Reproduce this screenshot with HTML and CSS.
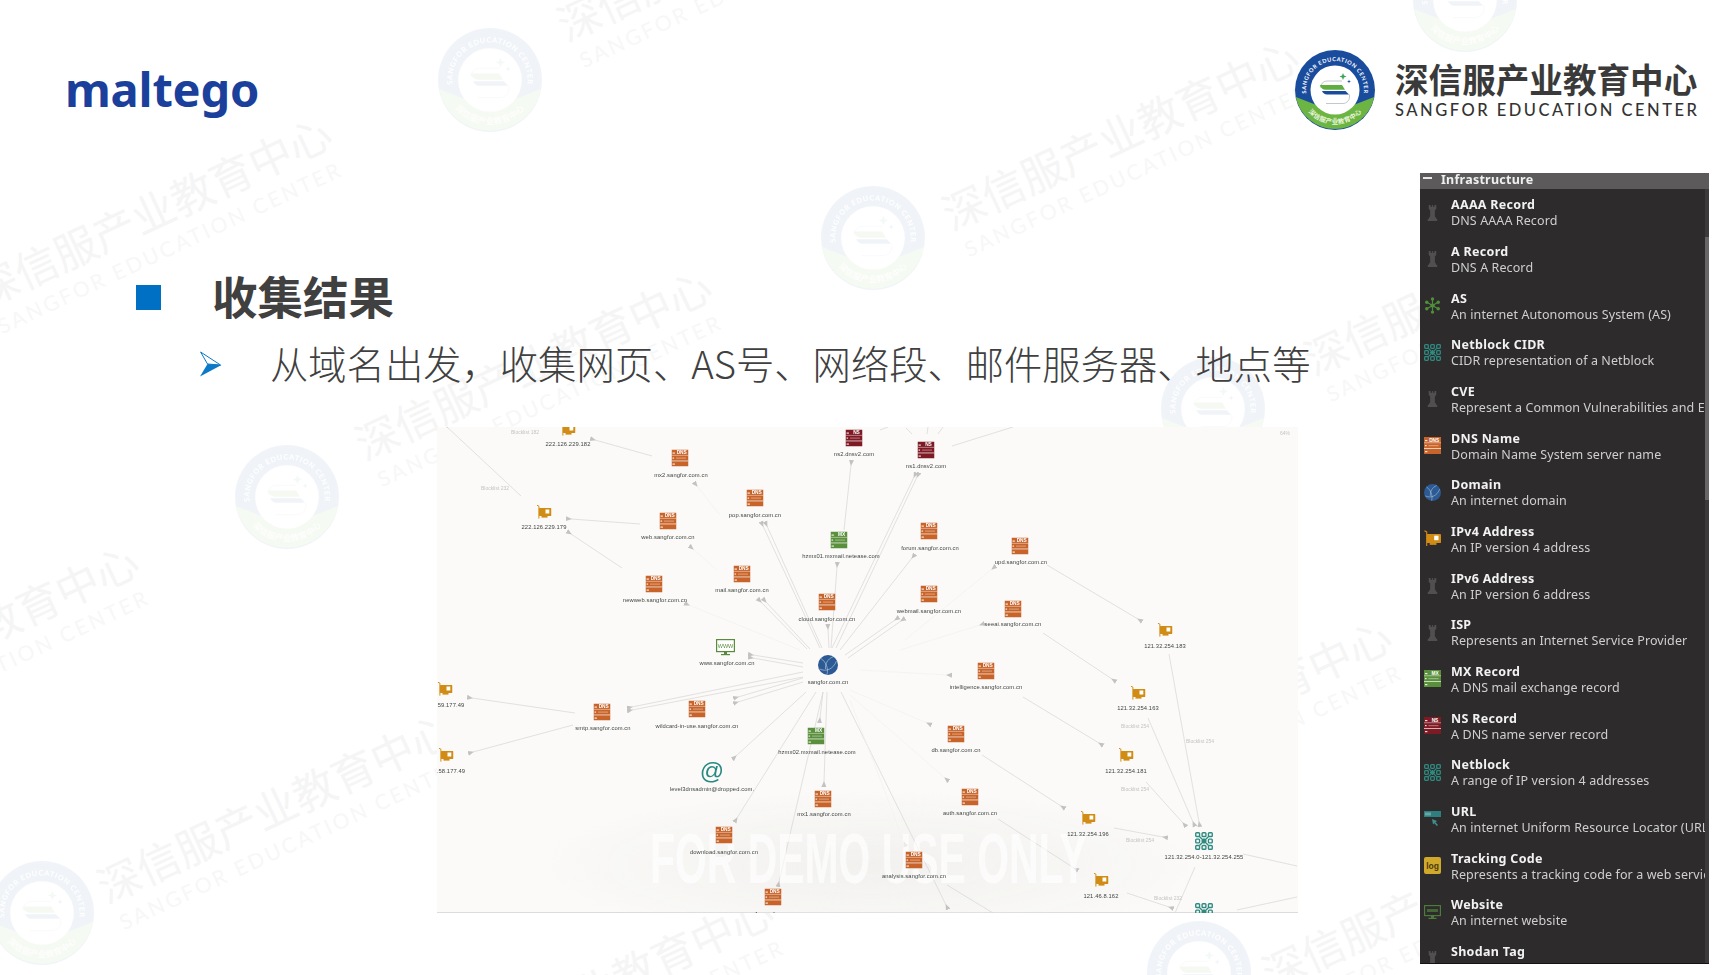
FILE: index.html
```html
<!DOCTYPE html>
<html lang="zh-CN">
<head>
<meta charset="utf-8">
<title>maltego 收集结果</title>
<link rel="stylesheet" href="styles.css">
</head>
<body>
<svg class="defs" aria-hidden="true">
  <symbol id="srv" viewBox="0 0 17 17">
    <rect width="17" height="17" fill="currentColor"/>
    <rect x="1" y="3" width="2.4" height="1.2" fill="#fff" opacity=".85"/>
    <rect x="0" y="5.4" width="17" height=".8" fill="#fff" opacity=".55"/>
    <rect x="1" y="8" width="1.6" height="1.2" fill="#fff" opacity=".85"/>
    <rect x="4.5" y="8" width="10" height="1.2" fill="#fff" opacity=".35"/>
    <rect x="0" y="11" width="17" height=".9" fill="#fff" opacity=".75"/>
    <rect x="1" y="14" width="2.4" height="1.2" fill="#fff" opacity=".85"/>
  </symbol>
  <symbol id="dns" viewBox="0 0 17 17"><use href="#srv" width="17" height="17"/><text x="10.2" y="4.7" class="srv-t">DNS</text></symbol>
  <symbol id="mx" viewBox="0 0 17 17"><use href="#srv" width="17" height="17"/><text x="11" y="4.7" class="srv-t">MX</text></symbol>
  <symbol id="ns" viewBox="0 0 17 17"><use href="#srv" width="17" height="17"/><text x="11" y="4.7" class="srv-t">NS</text></symbol>
  <symbol id="ip" viewBox="0 0 15 14">
    <path d="M.4.2 2.4 1.2V13.6" fill="none" stroke="currentColor" stroke-width="1"/>
    <rect x="2.4" y="3" width="12.6" height="8" rx=".8" fill="currentColor"/>
    <rect x="9" y="4.5" width="3.8" height="4" fill="#fff"/>
    <rect x="5" y="11" width="6" height="1.6" fill="currentColor"/>
  </symbol>
  <symbol id="net" viewBox="0 0 17 17">
    <g fill="none" stroke="currentColor" stroke-width="1.3">
      <rect x=".7" y=".7" width="3.6" height="3.6" rx=".8"/><rect x="6.7" y=".7" width="3.6" height="3.6" rx=".8"/><rect x="12.7" y=".7" width="3.6" height="3.6" rx=".8"/>
      <rect x=".7" y="6.7" width="3.6" height="3.6" rx=".8"/><rect x="12.7" y="6.7" width="3.6" height="3.6" rx=".8"/>
      <rect x=".7" y="12.7" width="3.6" height="3.6" rx=".8"/><rect x="6.7" y="12.7" width="3.6" height="3.6" rx=".8"/><rect x="12.7" y="12.7" width="3.6" height="3.6" rx=".8"/>
      <path d="M4.4 4.4 12.6 12.6M12.6 4.4 4.4 12.6M6 8.5H11M8.5 6V11"/>
    </g>
    <circle cx="8.5" cy="8.5" r="1.8" fill="currentColor"/>
  </symbol>
  <symbol id="globe" viewBox="0 0 20 20">
    <circle cx="10" cy="10" r="10" fill="currentColor"/>
    <g fill="none" stroke="#fff" stroke-width=".8" opacity=".55">
      <path d="M3 3.5C8 7 10.500 13 9 19.500M15 1.800C9.500 4 7 9 7.500 14M1.500 14C8 17 15 14.500 18.500 6"/>
    </g>
  </symbol>
  <symbol id="www" viewBox="0 0 19 17">
    <rect x=".6" y=".6" width="17.800" height="12" fill="#fff" stroke="#5a8a3c" stroke-width="1.200"/>
    <text x="9.500" y="9" class="www-t">WWW</text>
    <rect x="8" y="13" width="3" height="2" fill="#5a8a3c"/><rect x="5" y="15" width="9" height="1.200" fill="#5a8a3c"/>
  </symbol>
  <symbol id="site" viewBox="0 0 17 15">
    <rect x=".6" y=".6" width="15.800" height="10" fill="none" stroke="#4f7f3c" stroke-width="1.100"/>
    <rect x="3" y="4" width="11" height="3" fill="#4f7f3c" opacity=".7"/>
    <rect x="7" y="11" width="3" height="1.800" fill="#4f7f3c"/><rect x="4.500" y="12.800" width="8" height="1.200" fill="#4f7f3c"/>
  </symbol>
  <symbol id="rook" viewBox="0 0 12 18">
    <path fill="currentColor" d="M2 1h2v2h1.500V1h1v2H8V1h2v4L8.500 7v6L10 15v1h1v2H1v-2h1v-1l1.500-2V7L2 5z"/>
  </symbol>
  <symbol id="as" viewBox="0 0 16 16">
    <g stroke="#4f8f3a" stroke-width="1.100"><path d="M8 2V14M2.800 5 13.200 11M13.200 5 2.800 11"/></g>
    <g fill="#4f8f3a"><circle cx="8" cy="8" r="2"/><circle cx="8" cy="1.800" r="1.600"/><circle cx="8" cy="14.200" r="1.600"/><circle cx="2.600" cy="4.900" r="1.600"/><circle cx="13.400" cy="4.900" r="1.600"/><circle cx="2.600" cy="11.100" r="1.600"/><circle cx="13.400" cy="11.100" r="1.600"/></g>
  </symbol>
  <symbol id="url" viewBox="0 0 17 17">
    <rect y="1" width="17" height="6" fill="#2f7f80"/>
    <rect x="1" y="2.500" width="6" height="3" fill="#8fc0c0" opacity=".6"/>
    <path d="M8 9 13 11 11.500 12.200 14 15 12.800 16 10.400 13.200 9 14.500z" fill="#3b8f90"/>
  </symbol>
  <symbol id="log" viewBox="0 0 17 17">
    <rect width="17" height="17" rx="2" fill="#d0a92b"/>
    <text x="8.500" y="11.500" class="log-t">log</text>
  </symbol>
  <symbol id="badge" viewBox="0 0 80 80">
    <circle cx="40" cy="40" r="40" fill="#1a4c9e"/>
    <path d="M.8 47 24 56A24 24 0 0 0 56 56L79.200 47A40 40 0 0 1 .8 47Z" fill="#6db543"/>
    <circle cx="40" cy="40" r="24.500" fill="#fff"/>
    <path id="arc-top" d="M12.100 48A29 29 0 1 1 67.900 48" fill="none"/>
    <path id="arc-bot" d="M8.500 55A35.500 35.500 0 0 0 71.500 55" fill="none"/>
    <text class="badge-en"><textPath href="#arc-top" startOffset="50%">SANGFOR EDUCATION CENTER</textPath></text>
    <text class="badge-cn"><textPath href="#arc-bot" startOffset="50%">深信服产业教育中心</textPath></text>
    <path d="M47 31H32A6.500 6.500 0 0 0 25.500 37.500" fill="none" stroke="#9aa3ad" stroke-width=".6"/>
    <path d="M25 35H47L50 39.800H31A6 6 0 0 1 25 35Z" fill="#5fae3e"/>
    <path d="M27 41H50.500L54 44.500H32A6 6 0 0 1 27 41Z" fill="#1a4c9e"/>
    <path d="M31 53.500H48A6.500 6.500 0 0 0 54.500 47V44.500" fill="none" stroke="#9aa3ad" stroke-width=".6"/>
    <path d="M48 23 49 25.500 51.500 26.500 49 27.500 48 30 47 27.500 44.500 26.500 47 25.500Z" fill="#3fa45a"/>
    <path d="M54 29.500 54.500 31 56 31.500 54.500 32 54 33.500 53.500 32 52 31.500 53.500 31Z" fill="#1a4c9e"/>
  </symbol>
</svg>

<div class="slide">
  <div class="watermarks" aria-hidden="true">
    <div class="wm wm-a"><span class="wm-cn">深信服产业教育中心</span><span class="wm-en">SANGFOR EDUCATION CENTER</span></div>
    <div class="wm wm-b"><span class="wm-cn">深信服产业教育中心</span><span class="wm-en">SANGFOR EDUCATION CENTER</span></div>
    <div class="wm wm-c"><span class="wm-cn">深信服产业教育中心</span><span class="wm-en">SANGFOR EDUCATION CENTER</span></div>
    <div class="wm wm-d"><span class="wm-cn">深信服产业教育中心</span><span class="wm-en">SANGFOR EDUCATION CENTER</span></div>
    <div class="wm wm-e"><span class="wm-cn">深信服产业教育中心</span><span class="wm-en">SANGFOR EDUCATION CENTER</span></div>
    <div class="wm wm-f"><span class="wm-cn">深信服产业教育中心</span><span class="wm-en">SANGFOR EDUCATION CENTER</span></div>
    <div class="wm wm-g"><span class="wm-cn">深信服产业教育中心</span><span class="wm-en">SANGFOR EDUCATION CENTER</span></div>
    <div class="wm wm-h"><span class="wm-cn">深信服产业教育中心</span><span class="wm-en">SANGFOR EDUCATION CENTER</span></div>
    <div class="wm wm-i"><span class="wm-cn">深信服产业教育中心</span><span class="wm-en">SANGFOR EDUCATION CENTER</span></div>
    <div class="wm wm-j"><span class="wm-cn">深信服产业教育中心</span><span class="wm-en">SANGFOR EDUCATION CENTER</span></div>
    <svg class="wl wl-a"><use href="#badge"/></svg>
    <svg class="wl wl-b"><use href="#badge"/></svg>
    <svg class="wl wl-c"><use href="#badge"/></svg>
    <svg class="wl wl-d"><use href="#badge"/></svg>
    <svg class="wl wl-e"><use href="#badge"/></svg>
    <svg class="wl wl-f"><use href="#badge"/></svg>
    <svg class="wl wl-g"><use href="#badge"/></svg>
  </div>

  <header class="top">
    <div class="brand">maltego</div>
    <div class="org">
      <svg class="org-badge"><use href="#badge"/></svg>
      <div class="org-name">
        <div class="org-cn">深信服产业教育中心</div>
        <div class="org-en">SANGFOR EDUCATION CENTER</div>
      </div>
    </div>
  </header>

  <div class="main">
    <section class="content">
      <h1 class="h1"><span class="square"></span>收集结果</h1>
      <p class="sub">
        <svg class="bullet" viewBox="0 0 22 26"><path d="M.6 1 20.500 14 7.500 13Z" fill="#fff" stroke="#0b78c8" stroke-width="1"/><path d="M7.500 13 21.500 14 0 25.500Z" fill="#0b78c8"/></svg>
        从域名出发&#xFF0C;收集网页、AS号、网络段、邮件服务器、地点等
      </p>
      <figure class="graph">
        <svg class="graph-svg" viewBox="437 427 861 486" width="861" height="486">
          <defs>
            <marker id="arrow" markerUnits="userSpaceOnUse" markerWidth="6" markerHeight="6" refX="1" refY="2.500" orient="auto-start-reverse" viewBox="0 0 6 5">
              <path d="M6 0 0 2.500 6 5z" fill="#c2c2c0"/>
            </marker>
            <radialGradient id="shade"><stop offset="0" stop-color="#efeeec" stop-opacity=".8"/><stop offset="1" stop-color="#efeeec" stop-opacity="0"/></radialGradient>
          </defs>
          <ellipse cx="870" cy="865" rx="330" ry="75" fill="url(#shade)"/>
          <g class="edges" marker-start="url(#arrow)">
            <path d="M447 427 521 496"/><path d="M595 440 652 456"/><path d="M571 519 640 524"/><path d="M571 534 622 568"/>
            <path d="M763 526 820 648"/><path d="M767 526 822 648"/><path d="M761 602 807 649"/><path d="M766 602 810 649"/>
            <path d="M828 629 829 648"/><path d="M837 567 831 648"/><path d="M851 465 844 530"/>
            <path d="M917 477 836 648"/><path d="M914 477 832 648"/><path d="M912 558 840 650"/><path d="M895 620 845 655"/><path d="M901 621 848 658"/>
            <path d="M753 655 803 663"/><path d="M753 658 803 667"/><path d="M632 707 803 672"/><path d="M632 710 803 677"/><path d="M738 697 803 678"/><path d="M738 702 803 682"/>
            <path d="M472 698 575 713"/><path d="M473 752 573 725"/>
            <path d="M736 756 806 692"/><path d="M737 818 816 692"/><path d="M779 882 823 692"/><path d="M824 782 827 692"/><path d="M820 718 823 692"/>
            <path d="M946 905 841 692"/>
            <path d="M1138 619 1047 565"/><path d="M1112 679 1043 633"/><path d="M1199 822 1169 654"/><path d="M1193 822 1148 718"/><path d="M1183 823 1146 782"/>
            <path d="M1163 837 1114 828"/><path d="M1099 743 1023 697"/><path d="M1061 806 982 755"/><path d="M1074 868 998 819"/><path d="M1169 907 1127 893"/>
          </g>
          <g class="edges">
            <path d="M947 885 993 913"/><path d="M1195 867 1175 913"/><path d="M1243 854 1297 866"/><path d="M1237 910 1297 897"/><path d="M952 446 1013 427"/>
            <path d="M880 430 888 427"/><path d="M906 428 912 434"/><path d="M927 434 928 427"/><path d="M938 434 943 427"/>
          </g>
          <g class="edges faint" marker-start="url(#arrow)">
            <path d="M697 486 720 515"/><path d="M693 549 717 570"/><path d="M689 605 800 650"/><path d="M992 569 905 640"/><path d="M980 625 900 650"/>
            <path d="M947 675 860 670"/><path d="M927 723 850 690"/><path d="M945 778 850 695"/><path d="M904 842 850 700"/>
          </g>

          <text class="demo" x="650" y="883" textLength="437" lengthAdjust="spacingAndGlyphs">FOR DEMO USE ONLY</text>

          <g class="c-dns">
            <use href="#dns" x="671.500" y="449.500" width="17" height="17"/><use href="#dns" x="746.500" y="489.500" width="17" height="17"/>
            <use href="#dns" x="659.500" y="512.500" width="17" height="17"/><use href="#dns" x="733.500" y="565.500" width="17" height="17"/>
            <use href="#dns" x="645.500" y="575.500" width="17" height="17"/><use href="#dns" x="818.500" y="593.500" width="17" height="17"/>
            <use href="#dns" x="593.500" y="703.500" width="17" height="17"/><use href="#dns" x="688.500" y="700.500" width="17" height="17"/>
            <use href="#dns" x="814.500" y="790.500" width="17" height="17"/><use href="#dns" x="715.500" y="826.500" width="17" height="17"/>
            <use href="#dns" x="764.500" y="888.500" width="17" height="17"/><use href="#dns" x="920.500" y="522.500" width="17" height="17"/>
            <use href="#dns" x="1011.500" y="537.500" width="17" height="17"/><use href="#dns" x="920.500" y="585.500" width="17" height="17"/>
            <use href="#dns" x="1004.500" y="600.500" width="17" height="17"/><use href="#dns" x="977.500" y="662.500" width="17" height="17"/>
            <use href="#dns" x="947.500" y="725.500" width="17" height="17"/><use href="#dns" x="961.500" y="788.500" width="17" height="17"/>
            <use href="#dns" x="905.500" y="851.500" width="17" height="17"/><use href="#dns" x="946.500" y="913.500" width="17" height="17"/>
          </g>
          <g class="c-ns">
            <use href="#ns" x="845.500" y="429.500" width="17" height="17"/><use href="#ns" x="917.500" y="441.500" width="17" height="17"/>
          </g>
          <g class="c-mx">
            <use href="#mx" x="830.500" y="531.500" width="17" height="17"/><use href="#mx" x="807.500" y="727.500" width="17" height="17"/>
          </g>
          <g class="c-ip">
            <use href="#ip" x="560.500" y="422" width="15" height="14"/><use href="#ip" x="536.500" y="505" width="15" height="14"/>
            <use href="#ip" x="437.500" y="682" width="15" height="14"/><use href="#ip" x="438.500" y="748" width="15" height="14"/>
            <use href="#ip" x="1157.500" y="623" width="15" height="14"/><use href="#ip" x="1130.500" y="686" width="15" height="14"/>
            <use href="#ip" x="1118.500" y="748" width="15" height="14"/><use href="#ip" x="1080.500" y="811" width="15" height="14"/>
            <use href="#ip" x="1093.500" y="873" width="15" height="14"/>
          </g>
          <g class="c-net">
            <use href="#net" x="1195" y="832" width="18" height="18"/><use href="#net" x="1195" y="903" width="18" height="18"/>
          </g>
          <use class="c-globe" href="#globe" x="818" y="655" width="20" height="20"/>
          <use href="#www" x="716" y="639" width="19" height="17"/>
          <text class="at" x="712" y="779">@</text>

          <g class="lbl">
            <text x="568" y="446">222.126.229.182</text><text x="681" y="477">mx2.sangfor.com.cn</text><text x="854" y="456">ns2.dnsv2.com</text>
            <text x="755" y="517">pop.sangfor.com.cn</text><text x="544" y="529">222.126.229.179</text><text x="668" y="539">web.sangfor.com.cn</text>
            <text x="841" y="558">hzmx01.mxmail.netease.com</text><text x="742" y="592">mail.sangfor.com.cn</text><text x="655" y="602">newweb.sangfor.com.cn</text>
            <text x="827" y="621">cloud.sangfor.com.cn</text><text x="727" y="665">www.sangfor.com.cn</text><text x="828" y="684">sangfor.com.cn</text>
            <text x="451" y="707">59.177.49</text><text x="603" y="730">smtp.sangfor.com.cn</text><text x="697" y="728">wildcard-in-use.sangfor.com.cn</text>
            <text x="451" y="773">.58.177.49</text><text x="817" y="754">hzmx02.mxmail.netease.com</text><text x="712" y="791">level3dnsadmin@dropped.com.</text>
            <text x="824" y="816">mx1.sangfor.com.cn</text><text x="724" y="854">download.sangfor.com.cn</text><text x="773" y="916">ooa1.sangfor.com.cn</text>
            <text x="926" y="468">ns1.dnsv2.com</text><text x="930" y="550">forum.sangfor.com.cn</text><text x="1021" y="564">upd.sangfor.com.cn</text>
            <text x="929" y="613">webmail.sangfor.com.cn</text><text x="1013" y="626">seeai.sangfor.com.cn</text><text x="1165" y="648">121.32.254.183</text>
            <text x="986" y="689">intelligence.sangfor.com.cn</text><text x="1138" y="710">121.32.254.163</text><text x="956" y="752">db.sangfor.com.cn</text>
            <text x="1126" y="773">121.32.254.181</text><text x="970" y="815">auth.sangfor.com.cn</text><text x="1088" y="836">121.32.254.196</text>
            <text x="1204" y="859">121.32.254.0-121.32.254.255</text><text x="914" y="878">analysis.sangfor.com.cn</text><text x="1101" y="898">121.46.8.162</text>
          </g>
          <g class="tiny">
            <text x="525" y="434">Blocklist 182</text><text x="495" y="490">Blocklist 232</text><text x="1135" y="728">Blocklist 254</text><text x="1200" y="743">Blocklist 254</text>
            <text x="1135" y="791">Blocklist 254</text><text x="1140" y="842">Blocklist 254</text><text x="1168" y="900">Blocklist 232</text><text x="1285" y="435">64%</text>
          </g>
        </svg>
      </figure>
    </section>

    <aside class="panel">
      <div class="panel-head"><span class="minus"></span>Infrastructure</div>
      <div class="panel-body">
        <div class="list">
          <div class="row"><svg class="ico c-rook"><use href="#rook"/></svg><div class="txt"><div class="t">AAAA Record</div><div class="d">DNS AAAA Record</div></div></div>
          <div class="row"><svg class="ico c-rook"><use href="#rook"/></svg><div class="txt"><div class="t">A Record</div><div class="d">DNS A Record</div></div></div>
          <div class="row"><svg class="ico"><use href="#as"/></svg><div class="txt"><div class="t">AS</div><div class="d">An internet Autonomous System (AS)</div></div></div>
          <div class="row"><svg class="ico c-net"><use href="#net"/></svg><div class="txt"><div class="t">Netblock CIDR</div><div class="d">CIDR representation of a Netblock</div></div></div>
          <div class="row"><svg class="ico c-rook"><use href="#rook"/></svg><div class="txt"><div class="t">CVE</div><div class="d">Represent a Common Vulnerabilities and Exposures entry</div></div></div>
          <div class="row"><svg class="ico c-dns"><use href="#dns"/></svg><div class="txt"><div class="t">DNS Name</div><div class="d">Domain Name System server name</div></div></div>
          <div class="row"><svg class="ico c-globe"><use href="#globe"/></svg><div class="txt"><div class="t">Domain</div><div class="d">An internet domain</div></div></div>
          <div class="row"><svg class="ico c-ip"><use href="#ip"/></svg><div class="txt"><div class="t">IPv4 Address</div><div class="d">An IP version 4 address</div></div></div>
          <div class="row"><svg class="ico c-rook"><use href="#rook"/></svg><div class="txt"><div class="t">IPv6 Address</div><div class="d">An IP version 6 address</div></div></div>
          <div class="row"><svg class="ico c-rook"><use href="#rook"/></svg><div class="txt"><div class="t">ISP</div><div class="d">Represents an Internet Service Provider</div></div></div>
          <div class="row"><svg class="ico c-mx"><use href="#mx"/></svg><div class="txt"><div class="t">MX Record</div><div class="d">A DNS mail exchange record</div></div></div>
          <div class="row"><svg class="ico c-ns"><use href="#ns"/></svg><div class="txt"><div class="t">NS Record</div><div class="d">A DNS name server record</div></div></div>
          <div class="row"><svg class="ico c-net"><use href="#net"/></svg><div class="txt"><div class="t">Netblock</div><div class="d">A range of IP version 4 addresses</div></div></div>
          <div class="row"><svg class="ico"><use href="#url"/></svg><div class="txt"><div class="t">URL</div><div class="d">An internet Uniform Resource Locator (URL)</div></div></div>
          <div class="row"><svg class="ico"><use href="#log"/></svg><div class="txt"><div class="t">Tracking Code</div><div class="d">Represents a tracking code for a web service</div></div></div>
          <div class="row"><svg class="ico"><use href="#site"/></svg><div class="txt"><div class="t">Website</div><div class="d">An internet website</div></div></div>
          <div class="row"><svg class="ico c-rook"><use href="#rook"/></svg><div class="txt"><div class="t">Shodan Tag</div><div class="d">&nbsp;</div></div></div>
        </div>
        <div class="scroll"><div class="thumb"></div></div>
      </div>
    </aside>
  </div>
</div>
</body>
</html>
```

FILE: styles.css
```css
* { box-sizing: border-box; }
html, body { margin: 0; padding: 0; background: #fff; }
body { font-family: "Noto Sans", "Noto Sans CJK SC", sans-serif; }

.defs { display: none; }

.slide { position: relative; width: 1733px; height: 975px; overflow: hidden; background: #fff; }

/* watermark layer */
.watermarks { position: absolute; inset: 0; overflow: hidden; }
.wm {
  position: absolute; width: 400px; height: 100px;
  display: flex; flex-direction: column; align-items: center; justify-content: center;
  transform: rotate(-25deg); white-space: nowrap;
  font-family: "Noto Sans CJK SC", sans-serif;
}
.wm-cn { font-size: 43px; line-height: 56px; color: #f5f5f5; }
.wm-en { font-family: Lato, sans-serif; font-size: 21px; line-height: 28px; letter-spacing: 2.800px; color: #f7f7f7; }
.wm-a { left: -42px; top: 172px; }
.wm-b { left: 540px; top: -94px; }
.wm-c { left: 925px; top: 95px; }
.wm-d { left: 338px; top: 325px; }
.wm-e { left: -235px; top: 600px; }
.wm-f { left: 80px; top: 768px; }
.wm-g { left: 400px; top: 950px; }
.wm-h { left: 1245px; top: 855px; }
.wm-i { left: 1018px; top: 675px; }
.wm-j { left: 1287px; top: 240px; }
.wl { position: absolute; width: 104px; height: 104px; opacity: .06; }
.wl-a { left: 438px; top: 28px; }
.wl-b { left: 821px; top: 186px; }
.wl-c { left: 1161px; top: 357px; }
.wl-d { left: 235px; top: 445px; }
.wl-e { left: -10px; top: 861px; }
.wl-f { left: 1413px; top: -52px; }
.wl-g { left: 1147px; top: 921px; }

/* header */
.top { position: relative; height: 173px; display: flex; justify-content: space-between; align-items: flex-start; padding: 0 35px 0 65px; }
.brand { margin-top: 57px; font-family: "Noto Sans", sans-serif; font-weight: 700; font-size: 47px; line-height: 64px; color: #1a409c; letter-spacing: -.2px; }
.org { display: flex; align-items: center; gap: 20px; margin-top: 50px; }
.org-badge { width: 80px; height: 80px; display: block; }
.org-name { width: 303px; padding-bottom: 2px; }
.org-cn { font-family: "Noto Sans CJK SC", sans-serif; font-weight: 700; font-size: 33.600px; line-height: 38px; color: #3a3a3a; white-space: nowrap; }
.org-en { margin-top: 3px; font-family: Lato, sans-serif; font-weight: 500; font-size: 16.500px; line-height: 18px; letter-spacing: 2.500px; color: #333; white-space: nowrap; }

.badge-en { font-family: Lato, sans-serif; font-weight: 700; font-size: 5.600px; letter-spacing: .6px; fill: #fff; text-anchor: middle; }
.badge-cn { font-family: "Noto Sans CJK SC", sans-serif; font-weight: 700; font-size: 6.500px; letter-spacing: .2px; fill: #eaf5df; text-anchor: middle; }

/* main area */
.main { position: relative; display: flex; align-items: flex-start; }
.content { width: 1420px; flex: none; }
.h1 {
  margin: 92px 0 0 136px; display: flex; align-items: center; height: 60px;
  font-family: "Noto Sans CJK SC", sans-serif; font-weight: 700; font-size: 45.500px; color: #404040;
}
.square { width: 25px; height: 25px; margin: 5px 51px 0 0; background: #0070c4; }
.sub {
  margin: 12px 0 0 200px; display: flex; align-items: center; height: 50px; white-space: nowrap;
  font-family: "Noto Sans CJK SC", sans-serif; font-weight: 300; font-size: 38.300px; color: #404040;
}
.bullet { width: 22px; height: 26px; margin: 3px 48px 0 0; flex: none; }

/* graph image */
.graph { margin: 40px 0 0 437px; width: 861px; height: 486px; background: #fbfaf8; border-bottom: 1px solid #dcdcda; }
.graph-svg { display: block; filter: blur(.25px); }
.edges { fill: none; stroke: #d6d6d4; stroke-width: .7; }
.edges.faint { stroke: #f1f0ee; }
.demo { font-family: "Liberation Sans", sans-serif; font-weight: 700; font-size: 70px; fill: #fff; fill-opacity: .65; }
.lbl text { font-family: "Liberation Sans", sans-serif; font-size: 5.800px; letter-spacing: .1px; fill: #3c443e; text-anchor: middle; }
.tiny text { font-family: "Liberation Sans", sans-serif; font-size: 5px; fill: #c4c4c2; text-anchor: middle; }
.at { font-family: "Liberation Sans", sans-serif; font-size: 24px; fill: #2a8a82; text-anchor: middle; }
.srv-t { font-family: "Liberation Sans", sans-serif; font-weight: 700; font-size: 4.800px; fill: #fff; text-anchor: middle; }
.www-t { font-family: "Liberation Sans", sans-serif; font-size: 5.500px; fill: #5a8a3c; text-anchor: middle; }
.log-t { font-family: "Liberation Sans", sans-serif; font-weight: 700; font-size: 8.500px; fill: #4a3a10; text-anchor: middle; }
.c-dns { color: #c8642a; }
.c-ns { color: #7e1a24; }
.c-mx { color: #5a8f3c; }
.c-ip { color: #d08c14; }
.c-net { color: #2f8a80; }
.c-globe { color: #2b5a94; }
.c-rook { color: #524f50; }

/* side panel */
.panel { width: 289px; height: 791px; flex: none; background: #2e2b2c; border-bottom: 1px solid #141213; overflow: hidden; display: flex; flex-direction: column; }
.panel-head {
  height: 16px; flex: none; display: flex; align-items: center; padding-bottom: 4px; background: #5c5a5b; color: #f0f0f0;
  font-family: "Noto Sans", sans-serif; font-weight: 700; font-size: 12.500px; letter-spacing: .25px; filter: blur(.25px);
}
.minus { width: 9px; height: 2px; margin: 0 9px 2px 3px; background: #e8e8e8; }
.panel-body { flex: 1; display: flex; min-height: 0; }
.list { width: 285px; flex: none; overflow: hidden; }
.row { height: 46.670px; display: flex; align-items: center; gap: 10px; padding-left: 4px; white-space: nowrap; }
.ico { width: 17px; height: 17px; flex: none; }
.txt { margin-top: 2px; filter: blur(.25px); }
.t { font-family: "Noto Sans", sans-serif; font-weight: 700; font-size: 12.500px; line-height: 16px; letter-spacing: .3px; color: #f2f2f2; }
.d { font-family: "Noto Sans", sans-serif; font-size: 12.500px; line-height: 16px; letter-spacing: .1px; color: #cfcfcf; }
.scroll { width: 4px; flex: none; background: #3c3a3b; }
.thumb { width: 4px; height: 263px; margin-top: 48px; background: #676566; }
```
